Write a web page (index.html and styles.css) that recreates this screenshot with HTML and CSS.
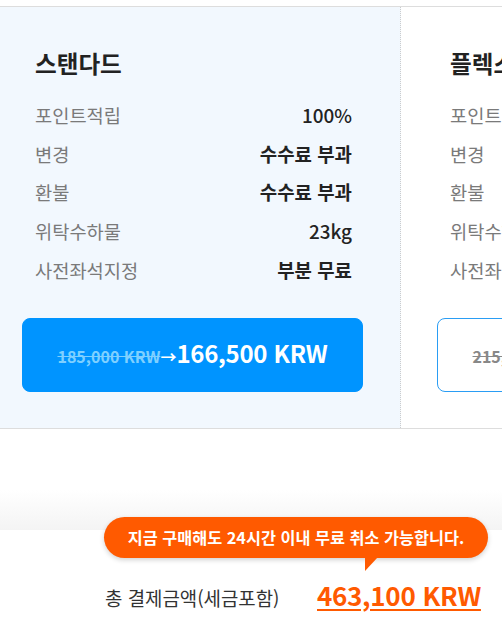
FILE: index.html
```html
<!DOCTYPE html>
<html lang="ko">
<head>
<meta charset="utf-8">
<link rel="stylesheet" href="styles.css">
</head>
<body>
<div class="page">
  <div class="top-space"></div>
  <section class="fares">
    <div class="track">
      <div class="card card-active">
        <h2 class="card-title">스탠다드</h2>
        <ul class="rows">
          <li class="row"><span class="label">포인트적립</span><span class="value">100%</span></li>
          <li class="row"><span class="label">변경</span><span class="value strong">수수료 부과</span></li>
          <li class="row"><span class="label">환불</span><span class="value strong">수수료 부과</span></li>
          <li class="row"><span class="label">위탁수하물</span><span class="value">23kg</span></li>
          <li class="row"><span class="label">사전좌석지정</span><span class="value strong">부분 무료</span></li>
        </ul>
        <button class="price-btn price-btn-active"><span class="old">185,000 KRW</span><span class="arrow">→</span><span class="new">166,500 KRW</span></button>
      </div>
      <div class="card">
        <h2 class="card-title">플렉스</h2>
        <ul class="rows">
          <li class="row"><span class="label">포인트적립</span><span class="value">100%</span></li>
          <li class="row"><span class="label">변경</span><span class="value strong">무료</span></li>
          <li class="row"><span class="label">환불</span><span class="value strong">수수료 부과</span></li>
          <li class="row"><span class="label">위탁수하물</span><span class="value">23kg</span></li>
          <li class="row"><span class="label">사전좌석지정</span><span class="value strong">무료</span></li>
        </ul>
        <button class="price-btn"><span class="old">215,000 KRW</span><span class="arrow">→</span><span class="new">193,500 KRW</span></button>
      </div>
    </div>
  </section>
  <div class="gap"></div>
  <div class="fade"></div>
  <div class="bottom-bar">
    <div class="tooltip">지금 구매해도 24시간 이내 무료 취소 가능합니다.</div>
    <div class="total">
      <span class="total-label">총 결제금액(세금포함)</span>
      <span class="total-price">463,100 KRW</span>
    </div>
  </div>
</div>
</body>
</html>
```

FILE: styles.css
```css
* { box-sizing: border-box; }
html, body {
  margin: 0;
  padding: 0;
  background: #fff;
  font-family: "Noto Sans CJK KR", "Noto Sans", sans-serif;
  overflow: hidden;
}
.page {
  width: 502px;
  height: 637px;
  overflow: hidden;
}
.top-space { height: 6px; }
.fares {
  border-top: 1px solid #dddddd;
  border-bottom: 1px solid #dddddd;
  overflow: hidden;
}
.track {
  display: flex;
  margin-left: -14px;
}
.card {
  flex: 0 0 415px;
  padding: 38px 37px 36px 36px;
  border-right: 1px dotted #cccccc;
  background: #fff;
}
.card-active { background: #f2f8fe; }
.card-title {
  margin: 0 0 14px 13px;
  font-size: 23.6px;
  font-weight: 700;
  line-height: 36px;
  color: #222;
}
.rows {
  list-style: none;
  margin: 0 0 29px 13px;
  padding: 0 11px 0 0;
}
.row {
  display: flex;
  justify-content: space-between;
  align-items: center;
  height: 38.8px;
}
.label { color: #7a7a7a; font-size: 18.7px; }
.value { color: #222; font-weight: 500; font-size: 18.9px; }
.value.strong { font-weight: 700; }
.price-btn {
  display: flex;
  align-items: baseline;
  justify-content: center;
  width: 341px;
  height: 74px;
  padding: 0 0 4px;
  border: 1px solid #2a9df4;
  border-radius: 8px;
  background: #fff;
  font-family: inherit;
  align-content: center;
  flex-wrap: wrap;
}
.price-btn .old {
  font-size: 16px;
  font-weight: 700;
  color: #888;
  text-decoration: line-through;
}
.price-btn .arrow {
  font-size: 16px;
  font-weight: 700;
  color: #888;
}
.price-btn .new {
  font-size: 24px;
  font-weight: 700;
  color: #0094ff;
  letter-spacing: -0.3px;
}
.price-btn-active {
  background: #0094ff;
  border-color: #0094ff;
}
.price-btn-active .old { color: #7fd0ff; }
.price-btn-active .arrow { color: #fff; }
.price-btn-active .new { color: #fff; }
.gap { height: 61px; }
.fade {
  height: 40px;
  background: linear-gradient(to bottom, #ffffff, #f4f4f4);
}
.bottom-bar {
  position: relative;
  height: 107px;
  background: #fff;
}
.tooltip {
  position: absolute;
  left: 104px;
  top: -13px;
  width: 384px;
  height: 41px;
  border-radius: 21px;
  background: #ff5a00;
  color: #fff;
  font-size: 16.3px;
  font-weight: 700;
  line-height: 40px;
  text-align: center;
  box-shadow: 0 2px 5px rgba(0,0,0,0.18);
}
.tooltip::after {
  content: "";
  position: absolute;
  left: 261px;
  top: 40px;
  width: 0;
  height: 0;
  border-top: 14px solid #ff5a00;
  border-right: 13px solid transparent;
}
.total {
  display: flex;
  align-items: baseline;
  padding: 46px 0 0 105px;
}
.total-label {
  font-size: 18.9px;
  color: #333;
  width: 212px;
}
.total-price {
  font-size: 26px;
  font-weight: 700;
  color: #ff5a00;
  text-decoration: underline;
  text-underline-offset: 3px;
  text-decoration-thickness: 2px;
  letter-spacing: -0.3px;
}
```
